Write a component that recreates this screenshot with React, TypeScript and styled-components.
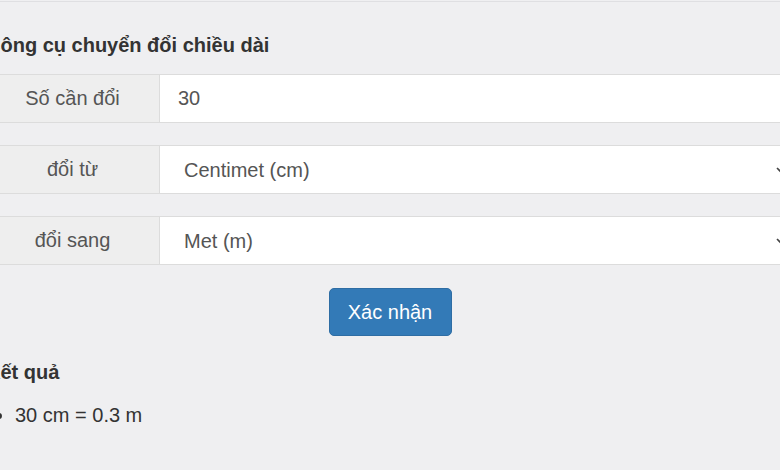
import { useState } from "react";
import styled, { createGlobalStyle } from "styled-components";

const GlobalStyle = createGlobalStyle`
  html, body {
    margin: 0;
    padding: 0;
    background: #efeff1;
    font-family: "Liberation Sans", Arial, sans-serif;
    color: #333;
    overflow: hidden;
  }
`;

const Page = styled.div`
  margin: 1px -14px 0;
  padding-top: 32px;
  border-top: 1px solid #dfdfe2;
`;

const Title = styled.h3<{ $gap: number }>`
  margin: 0 0 ${(p) => p.$gap}px;
  font-size: 20px;
  line-height: 22px;
  font-weight: bold;
  color: #333;
`;

const Row = styled.div`
  display: flex;
  box-sizing: border-box;
  height: 49px;
  margin-bottom: 22px;
  border-top: 1px solid #dcdcdc;
  border-bottom: 1px solid #dcdcdc;
  background: #fff;
`;

const Label = styled.div`
  flex: 0 0 173px;
  display: flex;
  align-items: center;
  justify-content: center;
  background: #eee;
  border-right: 1px solid #dcdcdc;
  color: #555;
  font-size: 20px;
`;

const Field = styled.div`
  position: relative;
  flex: 1;
  display: flex;
`;

const TextInput = styled.input`
  flex: 1;
  border: 0;
  outline: none;
  background: #fff;
  padding: 0 18px;
  font-family: inherit;
  font-size: 20px;
  color: #555;
`;

const Select = styled.select`
  flex: 1;
  appearance: none;
  border: 0;
  outline: none;
  background: #fff;
  padding: 0 24px;
  font-family: inherit;
  font-size: 20px;
  color: #555;
`;

const Chevron = styled.svg`
  position: absolute;
  right: 8px;
  top: 50%;
  margin-top: -3px;
  pointer-events: none;
`;

const Actions = styled.div`
  display: flex;
  justify-content: center;
  margin-top: 23px;
  margin-bottom: 25px;
`;

const Button = styled.button`
  width: 123px;
  height: 48px;
  border: 1px solid #2e6da4;
  border-radius: 5px;
  background: #337ab7;
  color: #fff;
  font-family: inherit;
  font-size: 20px;
  cursor: pointer;
`;

const Results = styled.ul`
  margin: 0;
  padding-left: 29px;
  font-size: 20px;
  line-height: 22px;
  color: #333;
`;

const units = [
  { label: "Milimet (mm)", short: "mm", factor: 0.001 },
  { label: "Centimet (cm)", short: "cm", factor: 0.01 },
  { label: "Decimet (dm)", short: "dm", factor: 0.1 },
  { label: "Met (m)", short: "m", factor: 1 },
  { label: "Kilomet (km)", short: "km", factor: 1000 },
];

function SelectField({ value, onChange }: { value: number; onChange: (v: number) => void }) {
  return (
    <Field>
      <Select value={value} onChange={(e) => onChange(Number(e.target.value))}>
        {units.map((u, i) => (
          <option key={u.short} value={i}>
            {u.label}
          </option>
        ))}
      </Select>
      <Chevron width="10" height="6" viewBox="0 0 10 6">
        <path d="M1 1 L5 5 L9 1" fill="none" stroke="#444" strokeWidth="1.6" />
      </Chevron>
    </Field>
  );
}

export default function App() {
  const [amount, setAmount] = useState("30");
  const [from, setFrom] = useState(1);
  const [to, setTo] = useState(3);
  const [result, setResult] = useState("30 cm = 0.3 m");

  const convert = () => {
    const n = parseFloat(amount) || 0;
    const r = (n * units[from].factor) / units[to].factor;
    setResult(`${n} ${units[from].short} = ${parseFloat(r.toPrecision(12))} ${units[to].short}`);
  };

  return (
    <>
      <GlobalStyle />
      <Page>
        <Title $gap={18}>Công cụ chuyển đổi chiều dài</Title>
        <Row>
          <Label>Số cần đổi</Label>
          <Field>
            <TextInput value={amount} onChange={(e) => setAmount(e.target.value)} />
          </Field>
        </Row>
        <Row>
          <Label>đổi từ</Label>
          <SelectField value={from} onChange={setFrom} />
        </Row>
        <Row>
          <Label>đổi sang</Label>
          <SelectField value={to} onChange={setTo} />
        </Row>
        <Actions>
          <Button onClick={convert}>Xác nhận</Button>
        </Actions>
        <Title $gap={21}>Kết quả</Title>
        <Results>
          <li>{result}</li>
        </Results>
      </Page>
    </>
  );
}
